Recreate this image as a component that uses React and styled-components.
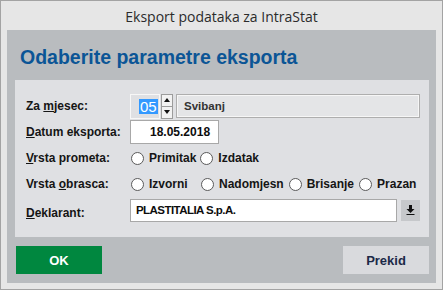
import React from "react";
import styled, { createGlobalStyle } from "styled-components";

const GlobalStyle = createGlobalStyle`
  html, body {
    margin: 0;
    padding: 0;
    background: #e6e6e6;
  }
  * {
    box-sizing: border-box;
  }
`;

export const Window = styled.div`
  width: 443px;
  height: 290px;
  border: 1px solid #a3a3a3;
  background: #e6e6e6;
  display: flex;
  flex-direction: column;
  font-family: "Liberation Sans", Arial, sans-serif;
`;

export const TitleBar = styled.div`
  height: 29px;
  display: flex;
  align-items: center;
  justify-content: center;
  padding-top: 1px;
  font-family: "Open Sans", "Noto Sans", sans-serif;
  font-size: 14px;
  color: #2b2b2b;
`;

export const Panel = styled.div`
  margin: 0 6px 0 6px;
  height: 253px;
  background: #b9bcbf;
  display: flex;
  flex-direction: column;
  padding: 0 7px 0 8px;
`;

export const Heading = styled.h1`
  margin: 0;
  height: 50px;
  padding: 17px 0 0 5px;
  font-size: 19.5px;
  line-height: 20px;
  font-weight: bold;
  color: #0b5596;
`;

export const Form = styled.div`
  height: 157px;
  background: #dfe0e3;
  padding: 13px 0 0 11px;
  display: flex;
  flex-direction: column;
`;

export const Row = styled.div`
  height: 26px;
  display: flex;
  align-items: center;
`;

export const Label = styled.div`
  width: 104px;
  flex: none;
  font-size: 12px;
  font-weight: bold;
  color: #151515;
  padding-top: ${(p) => p.$drop || 0}px;

  u {
    text-decoration: underline;
    text-underline-offset: 1px;
  }
`;

export const Controls = styled.div`
  display: flex;
  align-items: center;
`;

export const MonthBox = styled.div`
  width: 30px;
  height: 25px;
  border: 1px solid #f7f7f7;
  display: flex;
  align-items: center;
  padding-left: 8px;
`;

export const Selected = styled.span`
  background: #3399ff;
  color: #fff;
  font-size: 15px;
  line-height: 15px;
  padding: 0 1px;
`;

export const Spinner = styled.div`
  margin-left: 1px;
  width: 12px;
  height: 25px;
  display: flex;
  flex-direction: column;
  border: 1px solid #9c9c9c;
  background: #f2f2f2;
`;

export const SpinHalf = styled.div`
  flex: 1;
  display: flex;
  align-items: center;
  justify-content: center;
  border-top: ${(p) => (p.$down ? "1px solid #9c9c9c" : "none")};
`;

export const Caret = styled.span`
  width: 0;
  height: 0;
  border-left: 3px solid transparent;
  border-right: 3px solid transparent;
  ${(p) =>
    p.$down ? "border-top: 4px solid #111;" : "border-bottom: 4px solid #111;"}
`;

export const ReadField = styled.div`
  margin-left: 3px;
  width: 244px;
  height: 24px;
  border: 1px solid #aeaeae;
  box-shadow: inset 0 0 0 1px #f6f6f6;
  background: #e4e5e7;
  display: flex;
  align-items: center;
  padding-left: 7px;
  font-size: 11.5px;
  font-weight: bold;
  color: #333;
`;

export const TextField = styled.div`
  width: ${(p) => p.$w}px;
  height: ${(p) => p.$h || 24}px;
  border: 1px solid #a8a8a8;
  background: #fff;
  display: flex;
  align-items: center;
  padding-left: ${(p) => p.$pad}px;
  font-size: ${(p) => p.$size}px;
  letter-spacing: ${(p) => p.$track || 0}px;
  font-weight: bold;
  color: #0d0d0d;
`;

export const RadioGroup = styled.div`
  display: flex;
  align-items: center;
  gap: ${(p) => p.$gap}px;
  margin-left: 1px;
`;

export const RadioItem = styled.label`
  display: flex;
  align-items: center;
  gap: 5px;
  min-width: ${(p) => p.$min || 0}px;
  font-size: 12px;
  font-weight: bold;
  color: #151515;
`;

export const RadioDot = styled.span`
  width: 13px;
  height: 13px;
  border-radius: 50%;
  border: 1px solid #5a5a5a;
  background: #fff;
`;

export const DropButton = styled.div`
  margin-left: 4px;
  width: 19px;
  height: 21px;
  background: #c6c8cb;
  display: flex;
  align-items: center;
  justify-content: center;
`;

export const Footer = styled.div`
  margin-top: 9px;
  display: flex;
  justify-content: space-between;
  padding-left: 1px;
`;

export const Button = styled.div`
  width: 86px;
  height: 28px;
  display: flex;
  align-items: center;
  justify-content: center;
  font-size: 13px;
  font-weight: bold;
  background: ${(p) => (p.$primary ? "#00873f" : "#d9dadd")};
  color: ${(p) => (p.$primary ? "#ffffff" : "#1b2947")};
`;

const Radio = ({ children, min }) => (
  <RadioItem $min={min}>
    <RadioDot />
    {children}
  </RadioItem>
);

const DownloadIcon = () => (
  <svg width="9" height="10" viewBox="0 0 9 10">
    <path d="M3 0h3v4h2.5L4.5 8 0.5 4H3z" fill="#111" />
    <rect x="0.5" y="9" width="8" height="1" fill="#111" />
  </svg>
);

const App = () => {
  return (
    <>
      <GlobalStyle />
      <Window>
        <TitleBar>Eksport podataka za IntraStat</TitleBar>
        <Panel>
          <Heading>Odaberite parametre eksporta</Heading>
          <Form>
            <Row>
              <Label>
                Za <u>m</u>jesec:
              </Label>
              <Controls>
                <MonthBox>
                  <Selected>05</Selected>
                </MonthBox>
                <Spinner>
                  <SpinHalf>
                    <Caret />
                  </SpinHalf>
                  <SpinHalf $down>
                    <Caret $down />
                  </SpinHalf>
                </Spinner>
                <ReadField>Svibanj</ReadField>
              </Controls>
            </Row>
            <Row>
              <Label>
                <u>D</u>atum eksporta:
              </Label>
              <TextField $w={89} $pad={19} $size={12}>
                18.05.2018
              </TextField>
            </Row>
            <Row>
              <Label>
                <u>V</u>rsta prometa:
              </Label>
              <RadioGroup $gap={4}>
                <Radio>Primitak</Radio>
                <Radio>Izdatak</Radio>
              </RadioGroup>
            </Row>
            <Row>
              <Label>
                Vrsta <u>o</u>brasca:
              </Label>
              <RadioGroup $gap={5}>
                <Radio min={65}>Izvorni</Radio>
                <Radio>Nadomjesn</Radio>
                <Radio>Brisanje</Radio>
                <Radio>Prazan</Radio>
              </RadioGroup>
            </Row>
            <Row>
              <Label $drop={6}>
                <u>D</u>eklarant:
              </Label>
              <Controls>
                <TextField $w={267} $h={23} $pad={5} $size={11.5} $track={-0.55}>
                  PLASTITALIA S.p.A.
                </TextField>
                <DropButton>
                  <DownloadIcon />
                </DropButton>
              </Controls>
            </Row>
          </Form>
          <Footer>
            <Button $primary>OK</Button>
            <Button>Prekid</Button>
          </Footer>
        </Panel>
      </Window>
    </>
  );
};

export default App;
